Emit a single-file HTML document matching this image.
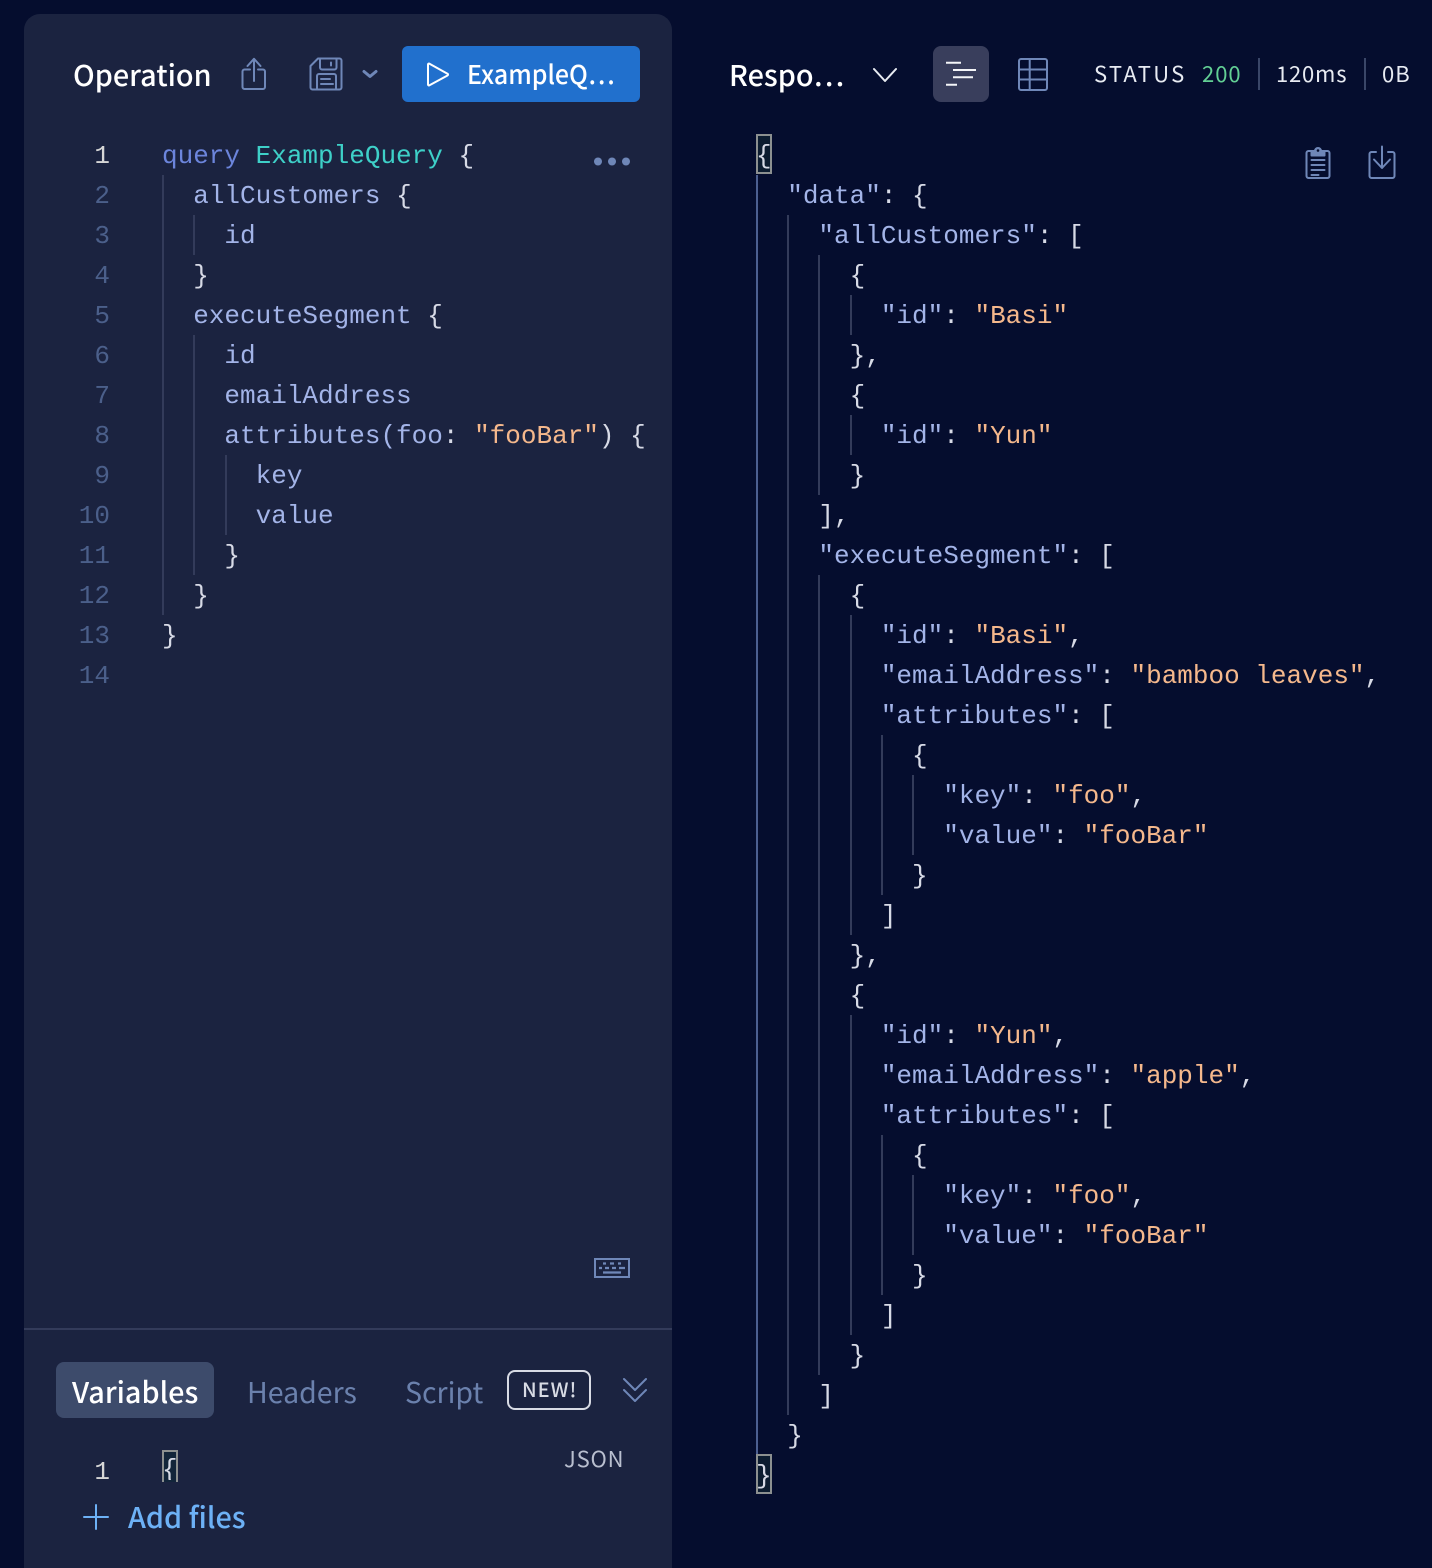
<!DOCTYPE html>
<html><head><meta charset="utf-8">
<style>
html,body{margin:0;padding:0;background:#050d2e;width:1432px;height:1568px;overflow:hidden}
#r{position:relative;width:1432px;height:1568px;overflow:hidden}
#r>*{position:absolute}
.panel{left:24px;top:14px;width:648px;height:1554px;background:#1b2340;border-radius:16px 16px 0 0}
pre{margin:0;font:26px/40px "Liberation Mono",monospace;white-space:pre}
.k{color:#a3b4e8}.s{color:#f5b88c}.p{color:#d7dae6}.q{color:#6c85dc}.n{color:#3ed0c8}
.ln{left:60px;width:50px;text-align:right;color:#4b5f8a;top:136px}
.u{font-family:"Noto Sans CJK JP","Liberation Sans",sans-serif;white-space:nowrap;line-height:1}
.g{width:2px}
.g1{background:#333b5a}
svg{overflow:visible}
</style></head><body><div id="r">
<div class="panel"></div>

<div class="u" style="left:73px;top:61px;font-size:28.800px;font-weight:500;color:#fff">Operation</div>
<svg style="left:0;top:0" width="1432" height="1568" fill="none" stroke="#6f87b8" stroke-width="2" stroke-linecap="round" stroke-linejoin="round">
<path d="M250 69.500h-5.500a2 2 0 0 0-2 2V87a2 2 0 0 0 2 2h18.500a2 2 0 0 0 2-2V71.500a2 2 0 0 0-2-2H258M254 81V59M247.500 66L254 58.800 260.500 66"/>
<path d="M318 58.500h21.500a2 2 0 0 1 2 2v27a2 2 0 0 1-2 2h-27a2 2 0 0 1-2-2V66zM320 58.500v9a2 2 0 0 0 2 2h12.500a2 2 0 0 0 2-2v-9M331 62.500v3M317 89.500V76a2 2 0 0 1 2-2h15a2 2 0 0 1 2 2v13.500M321 79h9M321 84h12"/>
<path d="M364 71.500L370 76.500 376 71.500" stroke-width="3"/>
<path d="M874 69L885 81 896 69" stroke="#e8ebf2"/>
<rect x="1019" y="59" width="28" height="31" rx="2"/>
<path d="M1029.700 59v31M1019 69.500h28M1019 79.500h28"/>
<path d="M1312 151h-3.500a2 2 0 0 0-2 2v23a2 2 0 0 0 2 2h19a2 2 0 0 0 2-2v-23a2 2 0 0 0-2-2H1324M1311.500 160h13M1311.500 165h13M1311.500 170h13M1311.500 175h7"/>
<path d="M1311.500 155.500V151h3.500a3 3 0 0 1 6 0h3.500v4.500z" fill="#6f87b8"/>
<circle cx="1318" cy="150.500" r="1.300" fill="#050d2e" stroke="none"/>
<path d="M1376 152h-4.500a2 2 0 0 0-2 2v22a2 2 0 0 0 2 2h21a2 2 0 0 0 2-2v-22a2 2 0 0 0-2-2H1388M1382 146.500V167.500M1374 159.500L1382 168 1390 159.500"/>
<rect x="595" y="1259" width="34" height="18" stroke-linecap="butt" stroke-linejoin="miter"/>
<path d="M603 1263.500h3M610 1263.500h4M618 1263.500h3M599 1268h3M605 1268h4M612 1268h4M619 1268h6M603 1272.500h18" stroke-linecap="butt" stroke-width="2.200"/>
<path d="M624 1379L635 1390 646 1379M624 1390L635 1401 646 1390"/>
<path d="M84 1517h24M96 1505v24" stroke="#6db1f6"/>
<circle cx="598" cy="161.500" r="4" fill="#6f87b8" stroke="none"/>
<circle cx="612" cy="161.500" r="4" fill="#6f87b8" stroke="none"/>
<circle cx="626" cy="161.500" r="4" fill="#6f87b8" stroke="none"/>
</svg>

<div style="left:402px;top:46px;width:238px;height:56px;background:#2170cd;border-radius:6px"></div>
<svg style="left:426px;top:62px" width="24" height="26" fill="none" stroke="#fff" stroke-width="2" stroke-linejoin="round"><path d="M2 2.500v20a1 1 0 0 0 1.500.8L21.500 13.500a1 1 0 0 0 0-1.800L3.500 1.700A1 1 0 0 0 2 2.500z"/></svg>
<div class="u" style="left:467px;top:61px;font-size:26px;font-weight:500;color:#fff;transform:scaleX(.96);transform-origin:0 0">ExampleQ…</div>

<pre class="ln"><span style="color:#d6d6d6">1</span>
2
3
4
5
6
7
8
9
10
11
12
13
14</pre>
<div class="g g1" style="left:162px;top:175px;height:440px"></div>
<div class="g g1" style="left:193px;top:215px;height:40px"></div>
<div class="g g1" style="left:193px;top:335px;height:240px"></div>
<div class="g g1" style="left:225px;top:455px;height:80px"></div>
<pre style="left:162px;top:136px"><span class="q">query</span> <span class="n">ExampleQuery</span> <span class="p">{</span>
  <span class="k">allCustomers</span> <span class="p">{</span>
    <span class="k">id</span>
  <span class="p">}</span>
  <span class="k">executeSegment</span> <span class="p">{</span>
    <span class="k">id</span>
    <span class="k">emailAddress</span>
    <span class="k">attributes(foo</span><span class="p">:</span> <span class="s">"fooBar"</span><span class="p">) {</span>
      <span class="k">key</span>
      <span class="k">value</span>
    <span class="p">}</span>
  <span class="p">}</span>
<span class="p">}</span></pre>

<div style="left:24px;top:1328px;width:648px;height:2px;background:#333b5a"></div>
<div style="left:56px;top:1362px;width:158px;height:56px;background:#3d4b6b;border-radius:8px"></div>
<div class="u" style="left:72px;top:1378px;font-size:28.800px;font-weight:500;color:#fff">Variables</div>
<div class="u" style="left:247px;top:1378px;font-size:28.500px;color:#6b81ad">Headers</div>
<div class="u" style="left:405px;top:1378px;font-size:28.500px;color:#6b81ad">Script</div>
<div style="left:507px;top:1370px;width:80px;height:36px;border:2px solid #d8dbe4;border-radius:8px"></div>
<div class="u" style="left:522px;top:1379px;font-size:20px;font-weight:500;letter-spacing:1px;color:#d8dbe4">NEW!</div>
<pre style="left:60px;top:1452px;width:50px;text-align:right;color:#d6d6d6">1</pre>
<div class="u" style="left:564px;top:1447px;font-size:22px;letter-spacing:.8px;color:#b9bfcf">JSON</div>
<div style="left:162px;top:1450px;width:12px;height:30px;border:2px solid #8c9090;border-bottom:0;background:#12253a"></div>
<div style="left:162px;top:1450px;width:16px;height:30px;overflow:hidden"><pre style="position:absolute;left:0;top:0;color:#d7dae6">{</pre></div>
<div class="u" style="left:128px;top:1503px;font-size:28.800px;font-weight:500;color:#6db1f6">Add files</div>

<div class="u" style="left:729px;top:61px;font-size:28.800px;font-weight:500;color:#fff">Respo…</div>
<div style="left:933px;top:46px;width:56px;height:56px;background:#393e5c;border-radius:8px"></div>
<svg style="left:0;top:0" width="1432" height="1568" fill="none" stroke="#f4f5f8" stroke-width="2"><path d="M946 62.700h15M953 70h23M953 77.300h20M946 84.700h11"/></svg>
<div class="u" style="left:1094px;top:62px;font-size:22px;letter-spacing:2.300px;color:#e8ebf2">STATUS</div>
<div class="u" style="left:1202px;top:62px;font-size:22px;letter-spacing:1px;color:#62cf94">200</div>
<div style="left:1258px;top:58px;width:2px;height:32px;background:#3a4668"></div>
<div class="u" style="left:1276px;top:62px;font-size:22px;letter-spacing:.8px;color:#e8ebf2">120ms</div>
<div style="left:1364px;top:58px;width:2px;height:32px;background:#3a4668"></div>
<div class="u" style="left:1382px;top:62px;font-size:22px;letter-spacing:1px;color:#e8ebf2">0B</div>

<div class="g" style="left:756px;top:175px;height:1280px;background:#4c5f90"></div>
<div class="g g1" style="left:787px;top:215px;height:1200px"></div>
<div class="g g1" style="left:818px;top:255px;height:240px"></div>
<div class="g g1" style="left:818px;top:575px;height:800px"></div>
<div class="g g1" style="left:850px;top:295px;height:40px"></div>
<div class="g g1" style="left:850px;top:415px;height:40px"></div>
<div class="g g1" style="left:850px;top:615px;height:320px"></div>
<div class="g g1" style="left:850px;top:1015px;height:320px"></div>
<div class="g g1" style="left:881px;top:735px;height:160px"></div>
<div class="g g1" style="left:881px;top:1135px;height:160px"></div>
<div class="g g1" style="left:912px;top:775px;height:80px"></div>
<div class="g g1" style="left:912px;top:1175px;height:80px"></div>
<div style="left:756px;top:134px;width:12px;height:36px;border:2px solid #8c9090;background:#0c1c30"></div>
<div style="left:756px;top:1454px;width:12px;height:36px;border:2px solid #8c9090;background:#0c1c30"></div>
<pre style="left:756px;top:136px"><span class="p">{</span>
  <span class="k">"data"</span><span class="p">: {</span>
    <span class="k">"allCustomers"</span><span class="p">: [</span>
      <span class="p">{</span>
        <span class="k">"id"</span><span class="p">:</span> <span class="s">"Basi"</span>
      <span class="p">},</span>
      <span class="p">{</span>
        <span class="k">"id"</span><span class="p">:</span> <span class="s">"Yun"</span>
      <span class="p">}</span>
    <span class="p">],</span>
    <span class="k">"executeSegment"</span><span class="p">: [</span>
      <span class="p">{</span>
        <span class="k">"id"</span><span class="p">:</span> <span class="s">"Basi"</span><span class="p">,</span>
        <span class="k">"emailAddress"</span><span class="p">:</span> <span class="s">"bamboo leaves"</span><span class="p">,</span>
        <span class="k">"attributes"</span><span class="p">: [</span>
          <span class="p">{</span>
            <span class="k">"key"</span><span class="p">:</span> <span class="s">"foo"</span><span class="p">,</span>
            <span class="k">"value"</span><span class="p">:</span> <span class="s">"fooBar"</span>
          <span class="p">}</span>
        <span class="p">]</span>
      <span class="p">},</span>
      <span class="p">{</span>
        <span class="k">"id"</span><span class="p">:</span> <span class="s">"Yun"</span><span class="p">,</span>
        <span class="k">"emailAddress"</span><span class="p">:</span> <span class="s">"apple"</span><span class="p">,</span>
        <span class="k">"attributes"</span><span class="p">: [</span>
          <span class="p">{</span>
            <span class="k">"key"</span><span class="p">:</span> <span class="s">"foo"</span><span class="p">,</span>
            <span class="k">"value"</span><span class="p">:</span> <span class="s">"fooBar"</span>
          <span class="p">}</span>
        <span class="p">]</span>
      <span class="p">}</span>
    <span class="p">]</span>
  <span class="p">}</span>
<span class="p">}</span></pre>
</div></body></html>
